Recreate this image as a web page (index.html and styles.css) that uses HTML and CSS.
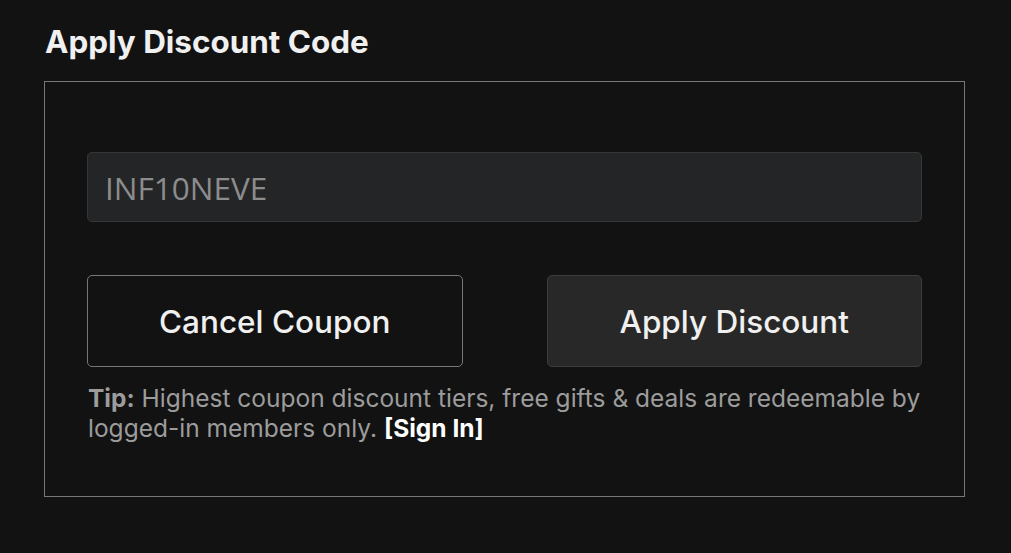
FILE: index.html
```html
<!DOCTYPE html>
<html lang="en">
<head>
    <meta charset="UTF-8">
    <title>Apply Discount Code</title>
    <link rel="stylesheet" href="styles.css">
</head>
<body>
    <h2 class="title">Apply Discount Code</h2>
    <div class="coupon-box">
        <input class="coupon-input" type="text" placeholder="INF10NEVE">
        <div class="coupon-actions">
            <button class="btn btn-cancel">Cancel Coupon</button>
            <button class="btn btn-apply">Apply Discount</button>
        </div>
        <p class="tip"><strong>Tip:</strong> Highest coupon discount tiers, free gifts &amp; deals are redeemable by logged-in members only. <a class="sign-in" href="#">[Sign In]</a></p>
    </div>
</body>
</html>
```

FILE: styles.css
```css
body {
    margin: 0;
    padding: 24px 46px 0 44px;
    background-color: #121212;
    color: #eee;
    font-family: Inter, "Liberation Sans", sans-serif;
}
.title {
    margin: 0 0 21px 1px;
    font-size: 31.4px;
    font-weight: 700;
    line-height: 36px;
    color: #f0f0f0;
}
.coupon-box {
    border: 1px solid #777;
    padding: 70px 42px 53px 42px;
}
.coupon-input {
    display: block;
    box-sizing: border-box;
    width: 100%;
    height: 70px;
    padding: 0 17px;
    background-color: #242527;
    border: 1px solid #363636;
    border-radius: 5px;
    font-family: "Open Sans", sans-serif;
    font-size: 31.5px;
    color: #eee;
    outline: none;
}
.coupon-input::placeholder {
    color: #8c8c8c;
}
.coupon-actions {
    display: flex;
    gap: 84px;
    margin-top: 53px;
}
.btn {
    flex: 1;
    height: 92px;
    border-radius: 5px;
    font-family: Inter, sans-serif;
    font-size: 31.5px;
    font-weight: 500;
    color: #f0f0f0;
    cursor: pointer;
}
.btn-cancel {
    background-color: #121212;
    border: 1px solid #777;
}
.btn-apply {
    background-color: #282828;
    border: 1px solid #3c3c3c;
}
.tip {
    margin: 16px 0 0 1px;
    font-size: 24.5px;
    line-height: 30px;
    color: #9c9c9c;
}
.tip strong {
    font-weight: 700;
}
.sign-in {
    color: #fff;
    font-weight: 700;
    text-decoration: none;
}
```
